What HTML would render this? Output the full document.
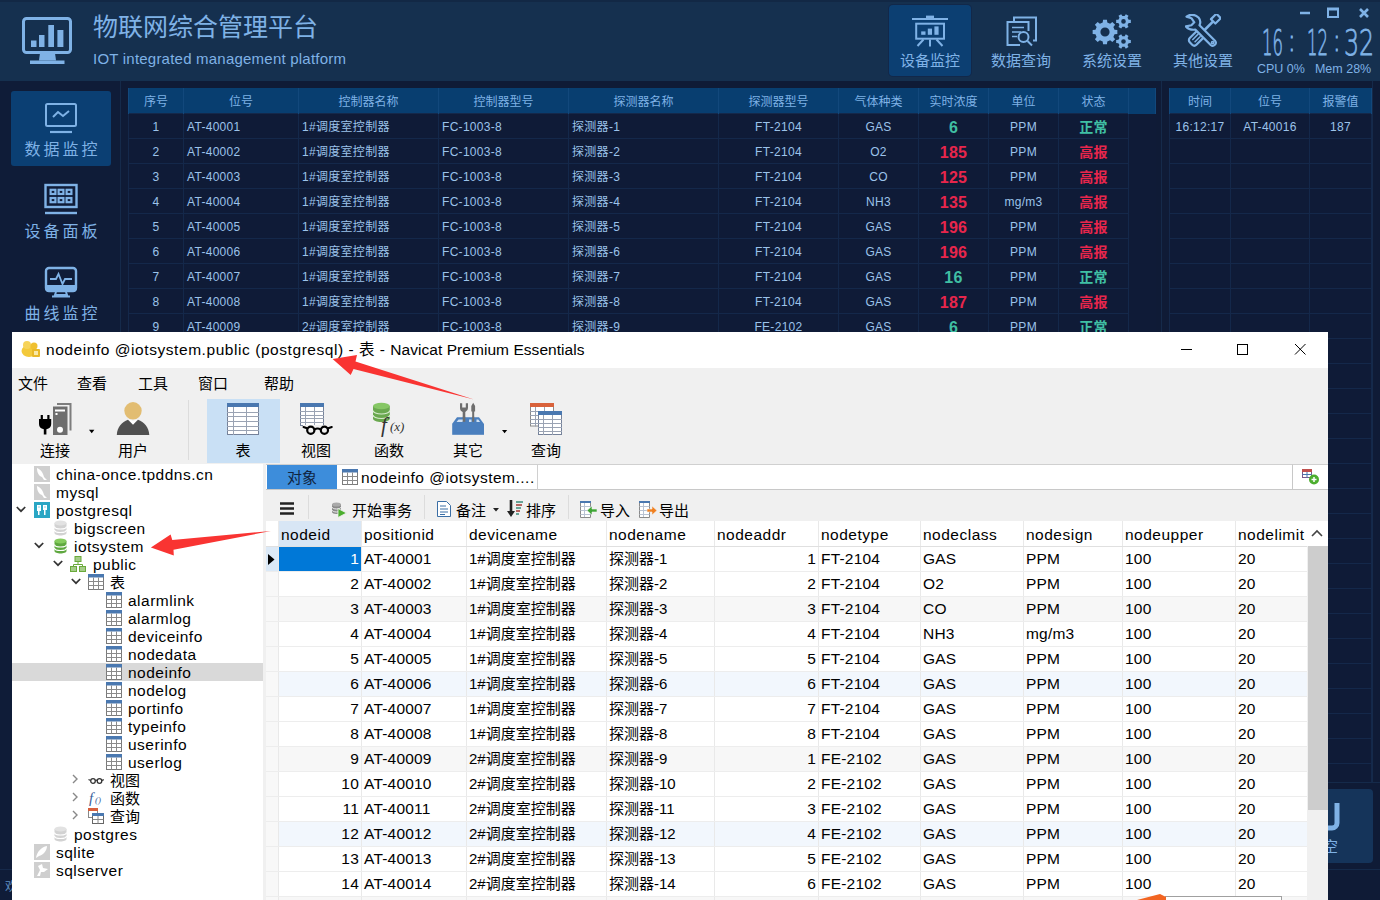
<!DOCTYPE html><html lang="zh"><head><meta charset="utf-8"><title>IOT</title><style>
*{margin:0;padding:0;box-sizing:border-box}
html,body{width:1380px;height:900px;overflow:hidden}
body{position:relative;background:#0f1b36;font-family:"Liberation Sans","Noto Sans CJK SC",sans-serif;font-size:12px;color:#8fb9e6}
.abs{position:absolute}
#hdr{position:absolute;left:0;top:0;width:1380px;height:81px;background:#15304f;box-shadow:inset 0 2px 0 #122845}
#ttl{position:absolute;left:93px;top:9px;font-size:25px;line-height:36px;color:#7fb2e6;white-space:nowrap}
#sub{position:absolute;left:93px;top:49px;font-size:15px;line-height:20px;color:#7fb2e6;white-space:nowrap;letter-spacing:.22px}
.nb{position:absolute;top:5px;width:82px;height:71px;border-radius:4px}
.nb.on{background:#0c3f72;box-shadow:0 0 0 1px #12284a}
.nb span{position:absolute;left:0;width:82px;top:46px;text-align:center;font-size:15px;line-height:20px;color:#7fb2e6;white-space:nowrap}
.nb svg{position:absolute}
#clk span{position:absolute;top:21px;font-family:"DejaVu Sans Light","DejaVu Sans",sans-serif;font-weight:200;font-size:36px;line-height:44px;color:#7fb2e6;-webkit-text-stroke:.8px #7fb2e6;white-space:nowrap;transform-origin:0 0}
#clk span.c{font-size:32px;top:17.5px;-webkit-text-stroke:1.2px #7fb2e6}
#cpu{position:absolute;left:1257px;top:60px;font-size:12.5px;line-height:18px;color:#7fb2e6;white-space:nowrap}#cpu i{font-style:normal;margin-left:10px}
#side{position:absolute;left:0;top:81px;width:121px;height:819px;background:#0f1c38;border-right:1px solid #152a4a}
.sb{position:absolute;left:11px;width:100px;height:75px;border-radius:3px}
.sb.on{background:#0b3f73}
.sb span{position:absolute;left:0;width:100px;top:48px;text-align:center;font-size:16px;line-height:22px;color:#7fb2e6;letter-spacing:3px;text-indent:3px;white-space:nowrap}
.sb svg{position:absolute;left:33px;top:11px}
table{border-collapse:collapse;table-layout:fixed}
.it{position:absolute;font-size:12px;color:#9cc3ea}
.it th{height:25px;line-height:21px;vertical-align:top;background:#083e70;color:#7fb2e6;font-weight:normal;border-left:1px solid #12487c;border-right:1px solid #12487c;padding:4px 0 0;white-space:nowrap;overflow:hidden}
.it td{height:25px;line-height:21px;vertical-align:top;border:1px solid #14284a;padding:3px 3px 0;white-space:nowrap;overflow:hidden;background:#0f1b37}
.it td.c{text-align:center;padding:3px 0 0}
.it td.v{text-align:center;padding:3px 0 0;font-weight:bold;font-size:16px}
.it td.s{text-align:center;padding:3px 0 0;font-weight:bold;font-size:14px}
.l{font-size:15.5px;letter-spacing:.5px}
.u{font-size:15.5px;letter-spacing:.2px}
.it td,.it td.c{letter-spacing:.3px}
.r{color:#e8264c}.g{color:#40bfa3}
/* navicat */
#nv{position:absolute;left:12px;top:332px;width:1316px;height:580px;background:#f0f0f0;color:#000;font-size:15px;overflow:hidden}
#nv .tb{position:absolute;left:0;top:0;width:1316px;height:36px;background:#fff}
#nv .tt{position:absolute;left:34px;top:7px;line-height:22px;white-space:nowrap;color:#000}
.mn{position:absolute;top:41px;font-size:15px;line-height:22px;white-space:nowrap}
.tl{position:absolute;top:108px;width:60px;text-align:center;font-size:15px;line-height:22px;white-space:nowrap}
.ti{position:absolute;top:71px;width:32px;height:32px}
#tree{position:absolute;left:0;top:132px;width:251px;height:448px;background:#fff}
.tr{position:absolute;left:0;width:251px;height:18px;line-height:18px;font-size:15px;white-space:nowrap}
.tr.sel{background:#d9d9d9}
.tr b{position:absolute;font-weight:normal;top:1px}
.tr svg{position:absolute;top:1px}
.gt{position:absolute;font-size:15px;color:#000}
#grid{position:absolute;left:252px;top:189px;width:1043px;height:400px;background:#fff}
.gr{position:absolute;left:0;width:1043px;height:25px;border-bottom:1px solid #ededed;line-height:24px;font-size:15px;white-space:nowrap}
.gr i{position:absolute;top:0;height:24px;font-style:normal;border-left:1px solid #e9e9e9;padding:0 2px;overflow:hidden}
.gr i.n{text-align:right}
</style></head><body>
<div id="hdr">
<svg class="abs" style="left:22px;top:17px" width="51" height="48" viewBox="0 0 51 48"><rect x="1.5" y="1.5" width="47" height="34" rx="3" fill="none" stroke="#7fb2e6" stroke-width="3"/><rect x="9" y="23.5" width="5.5" height="6.5" fill="#7fb2e6"/><rect x="17" y="18" width="5.5" height="12" fill="#7fb2e6"/><rect x="26.3" y="8" width="5.7" height="22" fill="#7fb2e6"/><rect x="35.4" y="13" width="6" height="17" fill="#7fb2e6"/><path d="M18 36h15l1 7.500h-17z" fill="#7fb2e6"/><rect x="8" y="43.500" width="34.500" height="3.500" fill="#7fb2e6"/></svg>
<div id="ttl">物联网综合管理平台</div>
<div id="sub">IOT integrated management platform</div>
<div class="nb on" style="left:889px"><svg style="left:23px;top:10px" width="36" height="32" viewBox="0 0 36 32" fill="none" stroke="#7fb2e6" stroke-width="2"><path d="M0 4h36"/><path d="M14 1.800h8" stroke-width="2.400"/><rect x="4.200" y="8.700" width="27.800" height="15"/><path d="M18 24.500v7M11.500 24.500l-6 6.500M24.500 24.500l6 6.500"/><g fill="#7fb2e6" stroke="none"><rect x="9.200" y="16.400" width="4.300" height="3.400"/><rect x="15.800" y="13.600" width="4.200" height="6.200"/><rect x="22.400" y="11.400" width="4.200" height="8.400"/></g></svg><span>设备监控</span></div>
<div class="nb" style="left:980px"><svg style="left:26px;top:11px" width="32" height="32" viewBox="0 0 32 32" fill="none" stroke="#7fb2e6" stroke-width="2"><path d="M8 5V1.500h22v23h-3"/><path d="M14 29H1.500V6h21v9"/><path d="M6 11.500h12M6 16h9M6 20.500h5" stroke-width="1.600"/><circle cx="17.500" cy="21" r="5"/><path d="M21.500 25l4.500 4.500"/></svg><span>数据查询</span></div>
<div class="nb" style="left:1071px"><svg style="left:21px;top:9px" width="42" height="36" viewBox="0 0 42 36" fill="#7fb2e6" fill-rule="evenodd"><path d="M22.53 15.71 L25.35 16.04 L25.35 19.96 L22.53 20.29 L21.36 23.12 L23.11 25.35 L20.35 28.11 L18.12 26.36 L15.29 27.53 L14.96 30.35 L11.04 30.35 L10.71 27.53 L7.88 26.36 L5.65 28.11 L2.89 25.35 L4.64 23.12 L3.47 20.29 L0.65 19.96 L0.65 16.04 L3.47 15.71 L4.64 12.88 L2.89 10.65 L5.65 7.89 L7.88 9.64 L10.71 8.47 L11.04 5.65 L14.96 5.65 L15.29 8.47 L18.12 9.64 L20.35 7.89 L23.11 10.65 L21.36 12.88Z M8.40 18.00 a4.60 4.60 0 1 0 9.20 0 a4.60 4.60 0 1 0 -9.20 0Z"/><path d="M36.64 5.73 L38.84 5.84 L38.84 8.96 L36.64 9.07 L35.51 11.01 L36.52 12.97 L33.82 14.53 L32.62 12.68 L30.38 12.68 L29.18 14.53 L26.48 12.97 L27.49 11.01 L26.36 9.07 L24.16 8.96 L24.16 5.84 L26.36 5.73 L27.49 3.79 L26.48 1.83 L29.18 0.27 L30.38 2.12 L32.62 2.12 L33.82 0.27 L36.52 1.83 L35.51 3.79Z M29.20 7.40 a2.30 2.30 0 1 0 4.60 0 a2.30 2.30 0 1 0 -4.60 0Z"/><path d="M36.64 25.83 L38.84 25.94 L38.84 29.06 L36.64 29.17 L35.51 31.11 L36.52 33.07 L33.82 34.63 L32.62 32.78 L30.38 32.78 L29.18 34.63 L26.48 33.07 L27.49 31.11 L26.36 29.17 L24.16 29.06 L24.16 25.94 L26.36 25.83 L27.49 23.89 L26.48 21.93 L29.18 20.37 L30.38 22.22 L32.62 22.22 L33.82 20.37 L36.52 21.93 L35.51 23.89Z M29.20 27.50 a2.30 2.30 0 1 0 4.60 0 a2.30 2.30 0 1 0 -4.60 0Z"/></svg><span>系统设置</span></div>
<div class="nb" style="left:1162px"><svg style="left:23px;top:9px" width="36" height="35" viewBox="0 0 36 35" fill="none" stroke="#7fb2e6" stroke-width="2.200" stroke-linejoin="round"><g transform="rotate(-45 18 17.500)"><rect x="1" y="12.800" width="16" height="9.400" rx="3"/><path d="M4.500 15.900h8.500M4.500 19.100h8.500" stroke-width="1.500"/><path d="M17 17.500h15.400" stroke-width="2.600"/><rect x="32.400" y="14.400" width="7.600" height="6.200"/></g><path d="M1.500 2.600Q7.500-1.500 13.500 3.500Q16.500 7 14.500 11.200L30 26.700A3.050 3.050 0 0 1 25.700 31L10.300 15.600Q4.500 16.500 0.900 12.400L6.400 11.200L9.300 8.300L6.400 4.200Z" fill="#15304f"/><circle cx="27.600" cy="28.600" r="1.100" stroke-width="1.600"/></svg><span>其他设置</span></div>
<svg class="abs" style="left:1296px;top:5px" width="80" height="18" viewBox="0 0 80 18" fill="none" stroke="#7fb2e6"><path d="M4 8h10" stroke-width="2.500"/><rect x="32" y="4" width="10" height="8" stroke-width="2"/><path d="M31 4h12" stroke-width="3"/><path d="M64 4l8 8M72 4l-8 8" stroke-width="2.600"/></svg>
<div id="clk"><span style="left:1262px;transform:scaleX(.46)">16</span><span class="c" style="left:1288px;transform:scaleX(.7)">:</span><span style="left:1307px;transform:scaleX(.46)">12</span><span class="c" style="left:1333px;transform:scaleX(.7)">:</span><span style="left:1344px;transform:scaleX(.66)">32</span></div>
<div id="cpu">CPU 0%<i>Mem 28%</i></div>
</div>
<div id="side">
<div class="sb on" style="top:10px"><svg width="34" height="32" viewBox="0 0 34 32" fill="none" stroke="#7fb2e6" stroke-width="2"><rect x="2" y="2" width="30" height="22" rx="1.500"/><path d="M9 15l5-5 5 4 6-5"/><path d="M6 30h22" stroke-width="2.200"/></svg><span>数据监控</span></div>
<div class="sb" style="top:92px"><svg style="top:10px" width="34" height="32" viewBox="0 0 34 32" fill="none" stroke="#7fb2e6" stroke-width="2"><rect x="1.500" y="2" width="31" height="22" stroke-width="2.400"/><path d="M1 30h32" stroke-width="2.400"/><g stroke-width="2.200"><rect x="6.600" y="6.800" width="4.800" height="4.200"/><rect x="14.600" y="6.800" width="4.800" height="4.200"/><rect x="22.600" y="6.800" width="4.800" height="4.200"/><rect x="6.600" y="15" width="4.800" height="4.200"/><rect x="14.600" y="15" width="4.800" height="4.200"/><rect x="22.600" y="15" width="4.800" height="4.200"/></g></svg><span>设备面板</span></div>
<div class="sb" style="top:174px"><svg width="34" height="32" viewBox="0 0 34 32" fill="none" stroke="#7fb2e6" stroke-width="2"><rect x="2" y="2" width="30" height="23" rx="3" stroke-width="2.400"/><path d="M2 20h30v2a3 3 0 0 1-3 3H5a3 3 0 0 1-3-3z" fill="#7fb2e6"/><path d="M6 13h6l2.500-5 4 10 2.500-5h7" stroke-width="1.800"/><path d="M12 26l-1 3h12l-1-3M8 30.500h18" stroke-width="2"/></svg><span>曲线监控</span></div>
<div class="abs" style="left:0;top:788px;width:121px;height:1px;background:#16294a"></div>
<div class="abs" style="left:5px;top:798px;font-size:12px;line-height:16px;color:#5f8fc4;white-space:nowrap">欢迎使用</div>
</div>
<div class="abs" style="left:122px;top:81px;width:1040px;height:260px;border-right:1px solid #152a4a"></div>
<table class="it" style="left:128px;top:88px;width:1027px"><colgroup>
<col style="width:55px">
<col style="width:115px">
<col style="width:140px">
<col style="width:130px">
<col style="width:150px">
<col style="width:120px">
<col style="width:80px">
<col style="width:70px">
<col style="width:70px">
<col style="width:70px">
<col style="width:27px">
</colgroup><tr><th>序号</th><th>位号</th><th>控制器名称</th><th>控制器型号</th><th>探测器名称</th><th>探测器型号</th><th>气体种类</th><th>实时浓度</th><th>单位</th><th>状态</th><th></th></tr>
<tr><td class="c">1</td><td>AT-40001</td><td>1#调度室控制器</td><td>FC-1003-8</td><td>探测器-1</td><td class="c">FT-2104</td><td class="c">GAS</td><td class="v g">6</td><td class="c">PPM</td><td class="s g">正常</td><td style="border-right:0;border-top:0;border-bottom:0"></td></tr>
<tr><td class="c">2</td><td>AT-40002</td><td>1#调度室控制器</td><td>FC-1003-8</td><td>探测器-2</td><td class="c">FT-2104</td><td class="c">O2</td><td class="v r">185</td><td class="c">PPM</td><td class="s r">高报</td><td style="border-right:0;border-top:0;border-bottom:0"></td></tr>
<tr><td class="c">3</td><td>AT-40003</td><td>1#调度室控制器</td><td>FC-1003-8</td><td>探测器-3</td><td class="c">FT-2104</td><td class="c">CO</td><td class="v r">125</td><td class="c">PPM</td><td class="s r">高报</td><td style="border-right:0;border-top:0;border-bottom:0"></td></tr>
<tr><td class="c">4</td><td>AT-40004</td><td>1#调度室控制器</td><td>FC-1003-8</td><td>探测器-4</td><td class="c">FT-2104</td><td class="c">NH3</td><td class="v r">135</td><td class="c">mg/m3</td><td class="s r">高报</td><td style="border-right:0;border-top:0;border-bottom:0"></td></tr>
<tr><td class="c">5</td><td>AT-40005</td><td>1#调度室控制器</td><td>FC-1003-8</td><td>探测器-5</td><td class="c">FT-2104</td><td class="c">GAS</td><td class="v r">196</td><td class="c">PPM</td><td class="s r">高报</td><td style="border-right:0;border-top:0;border-bottom:0"></td></tr>
<tr><td class="c">6</td><td>AT-40006</td><td>1#调度室控制器</td><td>FC-1003-8</td><td>探测器-6</td><td class="c">FT-2104</td><td class="c">GAS</td><td class="v r">196</td><td class="c">PPM</td><td class="s r">高报</td><td style="border-right:0;border-top:0;border-bottom:0"></td></tr>
<tr><td class="c">7</td><td>AT-40007</td><td>1#调度室控制器</td><td>FC-1003-8</td><td>探测器-7</td><td class="c">FT-2104</td><td class="c">GAS</td><td class="v g">16</td><td class="c">PPM</td><td class="s g">正常</td><td style="border-right:0;border-top:0;border-bottom:0"></td></tr>
<tr><td class="c">8</td><td>AT-40008</td><td>1#调度室控制器</td><td>FC-1003-8</td><td>探测器-8</td><td class="c">FT-2104</td><td class="c">GAS</td><td class="v r">187</td><td class="c">PPM</td><td class="s r">高报</td><td style="border-right:0;border-top:0;border-bottom:0"></td></tr>
<tr><td class="c">9</td><td>AT-40009</td><td>2#调度室控制器</td><td>FC-1003-8</td><td>探测器-9</td><td class="c">FE-2102</td><td class="c">GAS</td><td class="v g">6</td><td class="c">PPM</td><td class="s g">正常</td><td style="border-right:0;border-top:0;border-bottom:0"></td></tr>
<tr><td class="c">10</td><td>AT-40010</td><td>2#调度室控制器</td><td>FC-1003-8</td><td>探测器-10</td><td class="c">FE-2102</td><td class="c">GAS</td><td class="v g">8</td><td class="c">PPM</td><td class="s g">正常</td><td style="border-right:0;border-top:0;border-bottom:0"></td></tr>
</table>
<table class="it" style="left:1169px;top:88px;width:202px"><colgroup><col style="width:61px"><col style="width:79px"><col style="width:62px"></colgroup>
<tr><th>时间</th><th>位号</th><th>报警值</th></tr>
<tr><td class="c">16:12:17</td><td class="c">AT-40016</td><td class="c">187</td></tr>
<tr><td></td><td></td><td></td></tr>
<tr><td></td><td></td><td></td></tr>
<tr><td></td><td></td><td></td></tr>
<tr><td></td><td></td><td></td></tr>
<tr><td></td><td></td><td></td></tr>
<tr><td></td><td></td><td></td></tr>
<tr><td></td><td></td><td></td></tr>
<tr><td></td><td></td><td></td></tr>
<tr><td></td><td></td><td></td></tr>
<tr><td></td><td></td><td></td></tr>
<tr><td></td><td></td><td></td></tr>
<tr><td></td><td></td><td></td></tr>
<tr><td></td><td></td><td></td></tr>
<tr><td></td><td></td><td></td></tr>
<tr><td></td><td></td><td></td></tr>
<tr><td></td><td></td><td></td></tr>
<tr><td></td><td></td><td></td></tr>
<tr><td></td><td></td><td></td></tr>
<tr><td></td><td></td><td></td></tr>
<tr><td></td><td></td><td></td></tr>
<tr><td></td><td></td><td></td></tr>
<tr><td></td><td></td><td></td></tr>
<tr><td></td><td></td><td></td></tr>
<tr><td></td><td></td><td></td></tr>
<tr><td></td><td></td><td></td></tr>
<tr><td></td><td></td><td></td></tr>
</table>
<div class="abs" style="left:1163px;top:782px;width:217px;height:118px;background:#0f1b36;border-top:1px solid #152a4a"></div>
<div class="abs" style="left:1372px;top:81px;width:1px;height:701px;background:#152a4a"></div>
<div class="abs" style="left:1163px;top:869px;width:217px;height:1px;background:#152a4a"></div>
<div class="abs" style="left:1300px;top:789px;width:73px;height:74px;background:#15345a;border-radius:4px;overflow:hidden"><svg class="abs" style="left:20px;top:14px" width="34" height="28" viewBox="0 0 34 28" fill="none" stroke="#7fb2e6" stroke-width="5"><path d="M3 0v20a5 5 0 0 0 5 5h4a5 5 0 0 0 5-5V0"/></svg><span class="abs" style="left:8px;top:49px;font-size:15px;line-height:18px;color:#7fb2e6;white-space:nowrap">清空</span></div>
<div id="nv">
<div class="tb"></div>
<svg class="abs" style="left:9px;top:8px" width="20" height="18" viewBox="0 0 20 18"><ellipse cx="8" cy="11" rx="7.500" ry="6" fill="#f3c93b"/><circle cx="6" cy="5" r="4" fill="#f6d35a"/><circle cx="13" cy="6" r="3.500" fill="#f0c030"/><rect x="11" y="9" width="8" height="8" rx="1" fill="#e9b92a"/><rect x="13" y="11" width="4" height="4" fill="#f9e9a8"/></svg>
<div class="tt l"><span style="letter-spacing:.56px">nodeinfo @iotsystem.public (postgresql)</span> - 表 - <span style="letter-spacing:.05px">Navicat Premium Essentials</span></div>
<svg class="abs" style="left:1160px;top:8px" width="150" height="20" viewBox="0 0 150 20" fill="none" stroke="#000" stroke-width="1"><path d="M9 9.500h11"/><rect x="65.500" y="4.500" width="10" height="10"/><path d="M123 4l10.500 10.500M133.500 4l-10.500 10.500"/></svg>
<div class="mn" style="left:6px">文件</div>
<div class="mn" style="left:65px">查看</div>
<div class="mn" style="left:126px">工具</div>
<div class="mn" style="left:186px">窗口</div>
<div class="mn" style="left:252px">帮助</div>
<div class="abs" style="left:195px;top:67px;width:73px;height:64px;background:#c9e0f5"></div>
<div class="abs" style="left:176px;top:68px;width:1px;height:60px;background:#dcdcdc"></div>
<svg class="abs" style="left:26px;top:70px" width="36" height="34" viewBox="38 402 36 34"><path d="M57 404h13.500v26.500" fill="none" stroke="#7d7d7d" stroke-width="2"/><rect x="53" y="406.500" width="14.500" height="28.500" fill="#6e6e6e"/><rect x="55" y="409.500" width="10" height="2" fill="#fff"/><rect x="55.500" y="413" width="2" height="2" fill="#fff"/><circle cx="60" cy="429.800" r="3" fill="#fff"/><path d="M41.800 415v5M48.400 415v5" stroke="#000" stroke-width="2.200"/><path d="M39 419h12.200v5a6.100 5.500 0 0 1-4.800 5.300V434.500h-2.600V429.300A6.100 5.500 0 0 1 39 424z" fill="#000"/></svg>
<svg class="abs" style="left:76px;top:97px" width="8" height="6" viewBox="88 429 8 6"><path d="M89 429.800h5.400l-2.700 3.500z" fill="#000"/></svg>
<svg class="abs" style="left:104px;top:69px" width="34" height="35" viewBox="116 401 34 35"><circle cx="133" cy="410.800" r="8.700" fill="#e2bd72"/><path d="M116.800 435c0.500-8 5-13 11.200-15.200l5 5 5-5c6.200 2.200 10.800 7.200 11.300 15.200z" fill="#505050"/><path d="M128.500 419.300l4.500 5 4.500-5-4.500 1.600z" fill="#fff"/></svg>
<svg class="abs" style="left:215px;top:71px" width="32" height="32" viewBox="227 403 32 32"><rect x="227.5" y="403.5" width="31" height="31" fill="#fff" stroke="#75829a"/><rect x="227" y="403" width="32" height="4" fill="#4a78b0"/><path d="M233.5 407V435M246.5 407V435M227 412.5H259M227 416.5H259M227 421.5H259M227 426.5H259M227 430.5H259" stroke="#9aa3b3" fill="none"/></svg>
<svg class="abs" style="left:288px;top:71px" width="33" height="33" viewBox="300 403 33 33"><rect x="300.5" y="403.5" width="23" height="22" fill="#fff" stroke="#75829a"/><rect x="300" y="403" width="24" height="4" fill="#4a78b0"/><path d="M305.5 407V426M314.5 407V426M300 411.5H324M300 415.5H324M300 418.5H324M300 422.5H324" stroke="#9aa3b3" fill="none"/><rect x="303" y="425" width="22" height="2" fill="#f0f0f0"/><circle cx="310.800" cy="430.200" r="3.600" fill="#f0f0f0" stroke="#000" stroke-width="2.200"/><circle cx="324.400" cy="430.200" r="3.600" fill="#f0f0f0" stroke="#000" stroke-width="2.200"/><path d="M314.500 429.500q3-2 6.200 0M307 428.200l-3.500-1.200M328.200 428.200l3.600-1.200" stroke="#000" stroke-width="2" fill="none" stroke-linecap="round"/></svg>
<svg class="abs" style="left:360px;top:70px" width="34" height="35" viewBox="372 402 34 35"><path d="M373 406v12.500c0 2 3.800 3.500 8.400 3.500s8.400-1.500 8.400-3.500V406z" fill="#6aa84f"/><ellipse cx="381.400" cy="406" rx="8.400" ry="3.200" fill="#86c765"/><path d="M373 410.500c0 2 3.800 3.500 8.400 3.500s8.400-1.500 8.400-3.500M373 415c0 2 3.800 3.500 8.400 3.500s8.400-1.500 8.400-3.500" stroke="#d8ecd0" stroke-width="1.200" fill="none"/><text x="381" y="431.500" font-family="Liberation Serif,serif" font-style="italic" font-size="21" fill="#333" stroke="#f0f0f0" stroke-width="0">f</text><text x="390" y="431" font-family="Liberation Serif,serif" font-style="italic" font-size="13" fill="#333">(x)</text></svg>
<svg class="abs" style="left:439px;top:70px" width="34" height="34" viewBox="451 402 34 34"><path transform="translate(-2 0)" d="M464.700 421.500V412a4.200 4.200 0 0 1-2.700-4V403.300h2.200v4.200h3.600v-4.200h2.200V408a4.200 4.200 0 0 1-2.700 4V421.500z" fill="#6e6e6e"/><path d="M473.200 402.800l1.900 3.200v5.500h-0.900V421.500h-2V411.500h-0.900V406z" fill="#6e6e6e"/><path d="M457 417.200h22l5 6.800h-32z" fill="#4a7fbe"/><path d="M458.500 419.500h5l-1 2.500h-6zM469 419.500h2.500v2.500H469zM476.500 419.500h1.800l1.800 2.500h-3.600z" fill="#cfe0f2"/><rect x="452.200" y="424" width="31.800" height="10.800" fill="#4a7fbe"/><path d="M464 421.800v-5" stroke="#6e6e6e" stroke-width="2.600"/><path d="M473.200 421.800v-5" stroke="#6e6e6e" stroke-width="2"/></svg>
<svg class="abs" style="left:489px;top:97px" width="8" height="6" viewBox="501 429 8 6"><path d="M502 430h5.200l-2.600 3.300z" fill="#000"/></svg>
<svg class="abs" style="left:518px;top:71px" width="33" height="33" viewBox="530 403 33 33"><rect x="530.5" y="403.5" width="23" height="22.5" fill="#fff" stroke="#8a8a8a"/><rect x="530" y="403" width="24" height="4" fill="#d9623b"/><path d="M535.5 407V426.5M544.5 407V426.5M530 411.5H554M530 415.5H554M530 419.5H554M530 423.5H554" stroke="#9aa3b3" fill="none"/><rect x="538.5" y="411.5" width="23" height="23" fill="#fff" stroke="#75829a"/><rect x="538" y="411" width="24" height="4" fill="#4a78b0"/><path d="M543.5 415V435M552.5 415V435M538 419.5H562M538 423.5H562M538 427.5H562M538 431.5H562" stroke="#9aa3b3" fill="none"/></svg>
<div class="tl" style="left:13px">连接</div>
<div class="tl" style="left:91px">用户</div>
<div class="tl" style="left:201px">表</div>
<div class="tl" style="left:274px">视图</div>
<div class="tl" style="left:347px">函数</div>
<div class="tl" style="left:426px">其它</div>
<div class="tl" style="left:504px">查询</div>
<div id="tree">
<div class="tr" style="top:1px"><svg style="left:22px" width="16" height="16" viewBox="0 0 16 16"><rect width="16" height="16" fill="#cfcfcf"/><path d="M3 2c3 1 6 4 7 9l3 3h-3l-2-3c-3-1-5-4-5-9z" fill="#fff"/></svg><b class="l" style="left:44px">china-once.tpddns.cn</b></div>
<div class="tr" style="top:19px"><svg style="left:22px" width="16" height="16" viewBox="0 0 16 16"><rect width="16" height="16" fill="#cfcfcf"/><path d="M3 2c3 1 6 4 7 9l3 3h-3l-2-3c-3-1-5-4-5-9z" fill="#fff"/></svg><b class="l" style="left:44px">mysql</b></div>
<div class="tr" style="top:37px"><svg style="left:4px;top:5px" width="10" height="7" viewBox="0 0 10 7"><path d="M0.800 1l4.200 4.200 4.200-4.200" fill="none" stroke="#333" stroke-width="1.700"/></svg><svg style="left:22px" width="16" height="16" viewBox="0 0 16 16"><rect width="16" height="16" fill="#2aa6c4"/><path d="M3 3h4v6H5.500v4H4V9H3zM9 3h4v5h-1.500v5H10V8H9z" fill="#fff"/><path d="M4.500 5h1M10.500 5h1" stroke="#2aa6c4"/></svg><b class="l" style="left:44px">postgresql</b></div>
<div class="tr" style="top:55px"><svg style="left:42px" width="16" height="16" viewBox="1.500 0 16 16"><path d="M2 3v10c0 1.500 3 2.500 6 2.500s6-1 6-2.500V3z" fill="#d2d2d2"/><ellipse cx="8" cy="3" rx="6" ry="2.500" fill="#e2e2e2"/><path d="M2 6.500c0 1.500 3 2.500 6 2.500s6-1 6-2.500M2 10c0 1.500 3 2.500 6 2.500s6-1 6-2.500" stroke="#fff" stroke-width="1.200" fill="none"/></svg><b class="l" style="left:62px">bigscreen</b></div>
<div class="tr" style="top:73px"><svg style="left:22px;top:5px" width="10" height="7" viewBox="0 0 10 7"><path d="M0.800 1l4.200 4.200 4.200-4.200" fill="none" stroke="#333" stroke-width="1.700"/></svg><svg style="left:42px" width="16" height="16" viewBox="1.500 0 16 16"><path d="M2 3v10c0 1.500 3 2.500 6 2.500s6-1 6-2.500V3z" fill="#5fa83f"/><ellipse cx="8" cy="3" rx="6" ry="2.500" fill="#86cc5e"/><path d="M2 6.500c0 1.500 3 2.500 6 2.500s6-1 6-2.500M2 10c0 1.500 3 2.500 6 2.500s6-1 6-2.500" stroke="#fff" stroke-width="1.200" fill="none"/></svg><b class="l" style="left:62px">iotsystem</b></div>
<div class="tr" style="top:91px"><svg style="left:41px;top:5px" width="10" height="7" viewBox="0 0 10 7"><path d="M0.800 1l4.200 4.200 4.200-4.200" fill="none" stroke="#333" stroke-width="1.700"/></svg><svg style="left:58px" width="16" height="16" viewBox="0 0 16 16" fill="#6aaa3a"><rect x="4.500" y="0" width="7" height="6"/><rect x="0" y="10" width="7" height="6"/><rect x="9" y="10" width="7" height="6"/><path d="M8 6v2.500M3.500 10V8.500h9V10" stroke="#6aaa3a" fill="none"/><path d="M5.500 2h5M5.500 4h5M1 12h5M1 14h5M10 12h5M10 14h5" stroke="#fff" stroke-width="0.800"/></svg><b class="l" style="left:81px">public</b></div>
<div class="tr" style="top:109px"><svg style="left:59px;top:5px" width="10" height="7" viewBox="0 0 10 7"><path d="M0.800 1l4.200 4.200 4.200-4.200" fill="none" stroke="#333" stroke-width="1.700"/></svg><svg style="left:76px" width="16" height="16" viewBox="0 0 16 16"><rect x="0.500" y="0.500" width="15" height="15" fill="#fff" stroke="#7a7a7a"/><rect x="0" y="0" width="16" height="3.500" fill="#4a78b0"/><path d="M0.500 7.500h15M0.500 11.500h15M5.500 3.500v12M10.500 3.500v12" stroke="#8a8a8a" fill="none"/></svg><b style="left:98px">表</b></div>
<div class="tr" style="top:127px"><svg style="left:94px" width="16" height="16" viewBox="0 0 16 16"><rect x="0.500" y="0.500" width="15" height="15" fill="#fff" stroke="#7a7a7a"/><rect x="0" y="0" width="16" height="3.500" fill="#4a78b0"/><path d="M0.500 7.500h15M0.500 11.500h15M5.500 3.500v12M10.500 3.500v12" stroke="#8a8a8a" fill="none"/></svg><b class="l" style="left:116px">alarmlink</b></div>
<div class="tr" style="top:145px"><svg style="left:94px" width="16" height="16" viewBox="0 0 16 16"><rect x="0.500" y="0.500" width="15" height="15" fill="#fff" stroke="#7a7a7a"/><rect x="0" y="0" width="16" height="3.500" fill="#4a78b0"/><path d="M0.500 7.500h15M0.500 11.500h15M5.500 3.500v12M10.500 3.500v12" stroke="#8a8a8a" fill="none"/></svg><b class="l" style="left:116px">alarmlog</b></div>
<div class="tr" style="top:163px"><svg style="left:94px" width="16" height="16" viewBox="0 0 16 16"><rect x="0.500" y="0.500" width="15" height="15" fill="#fff" stroke="#7a7a7a"/><rect x="0" y="0" width="16" height="3.500" fill="#4a78b0"/><path d="M0.500 7.500h15M0.500 11.500h15M5.500 3.500v12M10.500 3.500v12" stroke="#8a8a8a" fill="none"/></svg><b class="l" style="left:116px">deviceinfo</b></div>
<div class="tr" style="top:181px"><svg style="left:94px" width="16" height="16" viewBox="0 0 16 16"><rect x="0.500" y="0.500" width="15" height="15" fill="#fff" stroke="#7a7a7a"/><rect x="0" y="0" width="16" height="3.500" fill="#4a78b0"/><path d="M0.500 7.500h15M0.500 11.500h15M5.500 3.500v12M10.500 3.500v12" stroke="#8a8a8a" fill="none"/></svg><b class="l" style="left:116px">nodedata</b></div>
<div class="tr sel" style="top:199px"><svg style="left:94px" width="16" height="16" viewBox="0 0 16 16"><rect x="0.500" y="0.500" width="15" height="15" fill="#fff" stroke="#7a7a7a"/><rect x="0" y="0" width="16" height="3.500" fill="#4a78b0"/><path d="M0.500 7.500h15M0.500 11.500h15M5.500 3.500v12M10.500 3.500v12" stroke="#8a8a8a" fill="none"/></svg><b class="l" style="left:116px">nodeinfo</b></div>
<div class="tr" style="top:217px"><svg style="left:94px" width="16" height="16" viewBox="0 0 16 16"><rect x="0.500" y="0.500" width="15" height="15" fill="#fff" stroke="#7a7a7a"/><rect x="0" y="0" width="16" height="3.500" fill="#4a78b0"/><path d="M0.500 7.500h15M0.500 11.500h15M5.500 3.500v12M10.500 3.500v12" stroke="#8a8a8a" fill="none"/></svg><b class="l" style="left:116px">nodelog</b></div>
<div class="tr" style="top:235px"><svg style="left:94px" width="16" height="16" viewBox="0 0 16 16"><rect x="0.500" y="0.500" width="15" height="15" fill="#fff" stroke="#7a7a7a"/><rect x="0" y="0" width="16" height="3.500" fill="#4a78b0"/><path d="M0.500 7.500h15M0.500 11.500h15M5.500 3.500v12M10.500 3.500v12" stroke="#8a8a8a" fill="none"/></svg><b class="l" style="left:116px">portinfo</b></div>
<div class="tr" style="top:253px"><svg style="left:94px" width="16" height="16" viewBox="0 0 16 16"><rect x="0.500" y="0.500" width="15" height="15" fill="#fff" stroke="#7a7a7a"/><rect x="0" y="0" width="16" height="3.500" fill="#4a78b0"/><path d="M0.500 7.500h15M0.500 11.500h15M5.500 3.500v12M10.500 3.500v12" stroke="#8a8a8a" fill="none"/></svg><b class="l" style="left:116px">typeinfo</b></div>
<div class="tr" style="top:271px"><svg style="left:94px" width="16" height="16" viewBox="0 0 16 16"><rect x="0.500" y="0.500" width="15" height="15" fill="#fff" stroke="#7a7a7a"/><rect x="0" y="0" width="16" height="3.500" fill="#4a78b0"/><path d="M0.500 7.500h15M0.500 11.500h15M5.500 3.500v12M10.500 3.500v12" stroke="#8a8a8a" fill="none"/></svg><b class="l" style="left:116px">userinfo</b></div>
<div class="tr" style="top:289px"><svg style="left:94px" width="16" height="16" viewBox="0 0 16 16"><rect x="0.500" y="0.500" width="15" height="15" fill="#fff" stroke="#7a7a7a"/><rect x="0" y="0" width="16" height="3.500" fill="#4a78b0"/><path d="M0.500 7.500h15M0.500 11.500h15M5.500 3.500v12M10.500 3.500v12" stroke="#8a8a8a" fill="none"/></svg><b class="l" style="left:116px">userlog</b></div>
<div class="tr" style="top:307px"><svg style="left:60px;top:3px" width="7" height="10" viewBox="0 0 7 10"><path d="M1 1l4 4-4 4" fill="none" stroke="#888" stroke-width="1.400"/></svg><svg style="left:76px" width="16" height="16" viewBox="0 0 16 16" fill="none" stroke="#333" stroke-width="1.300"><circle cx="5" cy="9" r="2.300"/><circle cx="11.500" cy="9" r="2.300"/><path d="M7.300 8.500q1-.8 2 0M2.700 8.500L0.500 7.500M13.800 8.500l2-1"/></svg><b style="left:98px">视图</b></div>
<div class="tr" style="top:325px"><svg style="left:60px;top:3px" width="7" height="10" viewBox="0 0 7 10"><path d="M1 1l4 4-4 4" fill="none" stroke="#888" stroke-width="1.400"/></svg><svg style="left:76px" width="16" height="16" viewBox="0 0 16 16"><text x="1" y="13" font-family="Liberation Serif,serif" font-style="italic" font-size="15" fill="#3a5f9a">f</text><text x="7" y="13" font-family="Liberation Serif,serif" font-style="italic" font-size="9" fill="#3a5f9a">()</text></svg><b style="left:98px">函数</b></div>
<div class="tr" style="top:343px"><svg style="left:60px;top:3px" width="7" height="10" viewBox="0 0 7 10"><path d="M1 1l4 4-4 4" fill="none" stroke="#888" stroke-width="1.400"/></svg><svg style="left:76px" width="16" height="16" viewBox="0 0 16 16"><rect x="0.500" y="0.500" width="9" height="9" fill="#fff" stroke="#888"/><rect x="0" y="0" width="10" height="3" fill="#d9603b"/><rect x="4.500" y="5.500" width="11" height="10" fill="#fff" stroke="#666"/><rect x="4" y="5" width="12" height="3" fill="#4a78b0"/><path d="M4.500 11.500h11M10 8v7.500" stroke="#888"/></svg><b style="left:98px">查询</b></div>
<div class="tr" style="top:361px"><svg style="left:42px" width="16" height="16" viewBox="1.500 0 16 16"><path d="M2 3v10c0 1.500 3 2.500 6 2.500s6-1 6-2.500V3z" fill="#d2d2d2"/><ellipse cx="8" cy="3" rx="6" ry="2.500" fill="#e2e2e2"/><path d="M2 6.500c0 1.500 3 2.500 6 2.500s6-1 6-2.500M2 10c0 1.500 3 2.500 6 2.500s6-1 6-2.500" stroke="#fff" stroke-width="1.200" fill="none"/></svg><b class="l" style="left:62px">postgres</b></div>
<div class="tr" style="top:379px"><svg style="left:22px" width="16" height="16" viewBox="0 0 16 16"><rect width="16" height="16" fill="#cfcfcf"/><path d="M2 14c1-6 5-11 11-12c0 5-4 9-8 10z" fill="#fff"/></svg><b class="l" style="left:44px">sqlite</b></div>
<div class="tr" style="top:397px"><svg style="left:22px" width="16" height="16" viewBox="0 0 16 16"><rect width="16" height="16" fill="#cfcfcf"/><path d="M3 14l3-6-2-4 4-2 1 4 5 1-4 3-3 0-1 4z" fill="#fff"/></svg><b class="l" style="left:44px">sqlserver</b></div>
</div>
<div class="abs" style="left:253px;top:132px;width:1028px;height:26px;background:#fff;border-top:1px solid #d0d0d0;border-bottom:1px solid #c8c8c8;border-right:1px solid #c8c8c8"></div>
<div class="abs" style="left:1281px;top:132px;width:35px;height:26px;background:#fff;border-top:1px solid #d0d0d0;border-bottom:1px solid #c8c8c8"></div>
<svg class="abs" style="left:1290px;top:137px" width="18" height="16" viewBox="0 0 18 16"><rect x="0.500" y="0.500" width="9" height="8" fill="#fff" stroke="#7a5a8a"/><rect x="0" y="0" width="10" height="3" fill="#c0504d"/><path d="M0.500 5.500h9M5 3v6" stroke="#4a78b0"/><circle cx="12" cy="10.500" r="5" fill="#4cae2e"/><path d="M9.500 10.500h5M12 8v5" stroke="#fff" stroke-width="1.500"/></svg>
<div class="abs" style="left:255px;top:133px;width:70px;height:24px;background:#3d8ddb;text-align:center;line-height:26px;font-size:15px;color:#10243f">对象</div>
<svg class="abs" style="top:137px;left:330px" width="16" height="16" viewBox="0 0 16 16"><rect x="0.500" y="0.500" width="15" height="15" fill="#fff" stroke="#7a7a7a"/><rect x="0" y="0" width="16" height="3.500" fill="#4a78b0"/><path d="M0.500 7.500h15M0.500 11.500h15M5.500 3.500v12M10.500 3.500v12" stroke="#8a8a8a" fill="none"/></svg>
<div class="abs l" style="left:349px;top:134px;line-height:24px;white-space:nowrap">nodeinfo @iotsystem....</div>
<div class="abs" style="left:525px;top:133px;width:1px;height:25px;background:#d0d0d0"></div>
<svg class="abs" style="left:268px;top:170px" width="14" height="13" viewBox="0 0 14 13"><path d="M0 1.500h14M0 6.500h14M0 11.500h14" stroke="#222" stroke-width="2.400"/></svg>
<div class="abs" style="left:296px;top:163px;width:1px;height:24px;background:#dcdcdc"></div>
<div class="abs" style="left:412px;top:163px;width:1px;height:24px;background:#dcdcdc"></div>
<div class="abs" style="left:556px;top:163px;width:1px;height:24px;background:#dcdcdc"></div>
<svg class="abs" style="left:319px;top:170px" width="16" height="16" viewBox="0 0 16 16"><path d="M1 2v8c0 1 2 2 4.500 2S10 11 10 10V2z" fill="#8a8a8a"/><ellipse cx="5.500" cy="2.500" rx="4.500" ry="2" fill="#aaa"/><path d="M1 5c0 1 2 2 4.500 2S10 6 10 5M1 8c0 1 2 2 4.500 2S10 9 10 8" stroke="#eee" fill="none"/><path d="M7 6.500l8.500 4.500L7 15.500z" fill="#4cae2e" stroke="#f0f0f0" stroke-width="0.800"/></svg>
<div class="abs" style="left:340px;top:168px;line-height:22px">开始事务</div>
<svg class="abs" style="left:425px;top:169px" width="14" height="16" viewBox="0 0 14 16"><path d="M0.500 0.500h9l4 4v11h-13z" fill="#fff" stroke="#3a6ea5"/><path d="M3 5h6M3 8h8M3 11h8M3 13.500h5" stroke="#3a6ea5"/></svg>
<div class="abs" style="left:444px;top:168px;line-height:22px">备注</div>
<svg class="abs" style="left:481px;top:176px" width="7" height="4" viewBox="0 0 7 4"><path d="M0 0h6l-3 3.500z" fill="#222"/></svg>
<svg class="abs" style="left:495px;top:168px" width="16" height="18" viewBox="0 0 16 18"><path d="M4 0v14" stroke="#222" stroke-width="2.600"/><path d="M0 11l4 6 4-6z" fill="#222"/><path d="M9 2h7M9 5h6M9 8h5M9 11h4M9 14h3" stroke="#3a8a7a" stroke-width="1.400"/><path d="M9 5h6M9 11h4" stroke="#d05050" stroke-width="1.400"/></svg>
<div class="abs" style="left:514px;top:168px;line-height:22px">排序</div>
<svg class="abs" style="left:568px;top:169px" width="18" height="17" viewBox="0 0 18 17"><path d="M0.500 0.500h10v16h-10z" fill="#fff" stroke="#8a8a8a"/><path d="M0 1h11" stroke="#4a78b0" stroke-width="2"/><path d="M0.500 5.500h10M0.500 9.500h10M0.500 13.500h10M4.500 2v14" stroke="#b9c3d3"/><path d="M17 8h-5V5l-5 4.500 5 4.500v-3h5z" fill="#3fa535" stroke="#f0f0f0" stroke-width=".6"/></svg>
<div class="abs" style="left:588px;top:168px;line-height:22px">导入</div>
<svg class="abs" style="left:627px;top:169px" width="18" height="17" viewBox="0 0 18 17"><path d="M0.500 0.500h10v16h-10z" fill="#fff" stroke="#8a8a8a"/><path d="M0 1h11" stroke="#4a78b0" stroke-width="2"/><path d="M0.500 5.500h10M0.500 9.500h10M0.500 13.500h10M4.500 2v14" stroke="#b9c3d3"/><path d="M8 8h5V5l5 4.500-5 4.500v-3H8z" fill="#f08020" stroke="#f0f0f0" stroke-width=".6"/></svg>
<div class="abs" style="left:647px;top:168px;line-height:22px">导出</div>
<div id="grid">
<div class="gr" style="top:0;height:26px;line-height:27px;border-bottom:1px solid #e0e0e0"><i style="left:0;width:14px;border-left:0;background:#fff"></i><i class="l" style="height:25px;left:14px;width:83px;background:#d8e6f5">nodeid</i><i class="l" style="height:25px;left:97px;width:105px">positionid</i><i class="l" style="height:25px;left:202px;width:140px">devicename</i><i class="l" style="height:25px;left:342px;width:109px">nodename</i><i class="l" style="height:25px;left:450px;width:104px">nodeaddr</i><i class="l" style="height:25px;left:554px;width:102px">nodetype</i><i class="l" style="height:25px;left:656px;width:103px">nodeclass</i><i class="l" style="height:25px;left:759px;width:99px">nodesign</i><i class="l" style="height:25px;left:858px;width:113px">nodeupper</i><i class="l" style="height:25px;left:971px;width:72px">nodelimit</i></div>
<div class="gr" style="top:26px"><i style="left:0;width:14px;border-left:0;background:#dbe9f7"><svg style="position:absolute;left:4px;top:7px" width="7" height="11" viewBox="0 0 7 11"><path d="M0 0l6.500 5.500L0 11z" fill="#000"/></svg></i><i class="n u" style="left:14px;width:83px;background:#0078d7;color:#fff">1</i><i class="u" style="left:97px;width:105px">AT-40001</i><i style="left:202px;width:140px">1#调度室控制器</i><i style="left:342px;width:109px">探测器-1</i><i class="n u" style="left:450px;width:104px">1</i><i class="u" style="left:554px;width:102px">FT-2104</i><i class="u" style="left:656px;width:103px">GAS</i><i class="u" style="left:759px;width:99px">PPM</i><i class="u" style="left:858px;width:113px">100</i><i class="u" style="left:971px;width:72px">20</i></div>
<div class="gr" style="top:51px"><i style="left:0;width:14px;border-left:0;background:#f8f8f8"></i><i class="n u" style="left:14px;width:83px">2</i><i class="u" style="left:97px;width:105px">AT-40002</i><i style="left:202px;width:140px">1#调度室控制器</i><i style="left:342px;width:109px">探测器-2</i><i class="n u" style="left:450px;width:104px">2</i><i class="u" style="left:554px;width:102px">FT-2104</i><i class="u" style="left:656px;width:103px">O2</i><i class="u" style="left:759px;width:99px">PPM</i><i class="u" style="left:858px;width:113px">100</i><i class="u" style="left:971px;width:72px">20</i></div>
<div class="gr" style="top:76px;background:#f7f7f7"><i style="left:0;width:14px;border-left:0;background:#f8f8f8"></i><i class="n u" style="left:14px;width:83px">3</i><i class="u" style="left:97px;width:105px">AT-40003</i><i style="left:202px;width:140px">1#调度室控制器</i><i style="left:342px;width:109px">探测器-3</i><i class="n u" style="left:450px;width:104px">3</i><i class="u" style="left:554px;width:102px">FT-2104</i><i class="u" style="left:656px;width:103px">CO</i><i class="u" style="left:759px;width:99px">PPM</i><i class="u" style="left:858px;width:113px">100</i><i class="u" style="left:971px;width:72px">20</i></div>
<div class="gr" style="top:101px"><i style="left:0;width:14px;border-left:0;background:#f8f8f8"></i><i class="n u" style="left:14px;width:83px">4</i><i class="u" style="left:97px;width:105px">AT-40004</i><i style="left:202px;width:140px">1#调度室控制器</i><i style="left:342px;width:109px">探测器-4</i><i class="n u" style="left:450px;width:104px">4</i><i class="u" style="left:554px;width:102px">FT-2104</i><i class="u" style="left:656px;width:103px">NH3</i><i class="u" style="left:759px;width:99px">mg/m3</i><i class="u" style="left:858px;width:113px">100</i><i class="u" style="left:971px;width:72px">20</i></div>
<div class="gr" style="top:126px"><i style="left:0;width:14px;border-left:0;background:#f8f8f8"></i><i class="n u" style="left:14px;width:83px">5</i><i class="u" style="left:97px;width:105px">AT-40005</i><i style="left:202px;width:140px">1#调度室控制器</i><i style="left:342px;width:109px">探测器-5</i><i class="n u" style="left:450px;width:104px">5</i><i class="u" style="left:554px;width:102px">FT-2104</i><i class="u" style="left:656px;width:103px">GAS</i><i class="u" style="left:759px;width:99px">PPM</i><i class="u" style="left:858px;width:113px">100</i><i class="u" style="left:971px;width:72px">20</i></div>
<div class="gr" style="top:151px;background:#f2f7fd"><i style="left:0;width:14px;border-left:0;background:#f8f8f8"></i><i class="n u" style="left:14px;width:83px">6</i><i class="u" style="left:97px;width:105px">AT-40006</i><i style="left:202px;width:140px">1#调度室控制器</i><i style="left:342px;width:109px">探测器-6</i><i class="n u" style="left:450px;width:104px">6</i><i class="u" style="left:554px;width:102px">FT-2104</i><i class="u" style="left:656px;width:103px">GAS</i><i class="u" style="left:759px;width:99px">PPM</i><i class="u" style="left:858px;width:113px">100</i><i class="u" style="left:971px;width:72px">20</i></div>
<div class="gr" style="top:176px"><i style="left:0;width:14px;border-left:0;background:#f8f8f8"></i><i class="n u" style="left:14px;width:83px">7</i><i class="u" style="left:97px;width:105px">AT-40007</i><i style="left:202px;width:140px">1#调度室控制器</i><i style="left:342px;width:109px">探测器-7</i><i class="n u" style="left:450px;width:104px">7</i><i class="u" style="left:554px;width:102px">FT-2104</i><i class="u" style="left:656px;width:103px">GAS</i><i class="u" style="left:759px;width:99px">PPM</i><i class="u" style="left:858px;width:113px">100</i><i class="u" style="left:971px;width:72px">20</i></div>
<div class="gr" style="top:201px"><i style="left:0;width:14px;border-left:0;background:#f8f8f8"></i><i class="n u" style="left:14px;width:83px">8</i><i class="u" style="left:97px;width:105px">AT-40008</i><i style="left:202px;width:140px">1#调度室控制器</i><i style="left:342px;width:109px">探测器-8</i><i class="n u" style="left:450px;width:104px">8</i><i class="u" style="left:554px;width:102px">FT-2104</i><i class="u" style="left:656px;width:103px">GAS</i><i class="u" style="left:759px;width:99px">PPM</i><i class="u" style="left:858px;width:113px">100</i><i class="u" style="left:971px;width:72px">20</i></div>
<div class="gr" style="top:226px;background:#f7f7f7"><i style="left:0;width:14px;border-left:0;background:#f8f8f8"></i><i class="n u" style="left:14px;width:83px">9</i><i class="u" style="left:97px;width:105px">AT-40009</i><i style="left:202px;width:140px">2#调度室控制器</i><i style="left:342px;width:109px">探测器-9</i><i class="n u" style="left:450px;width:104px">1</i><i class="u" style="left:554px;width:102px">FE-2102</i><i class="u" style="left:656px;width:103px">GAS</i><i class="u" style="left:759px;width:99px">PPM</i><i class="u" style="left:858px;width:113px">100</i><i class="u" style="left:971px;width:72px">20</i></div>
<div class="gr" style="top:251px"><i style="left:0;width:14px;border-left:0;background:#f8f8f8"></i><i class="n u" style="left:14px;width:83px">10</i><i class="u" style="left:97px;width:105px">AT-40010</i><i style="left:202px;width:140px">2#调度室控制器</i><i style="left:342px;width:109px">探测器-10</i><i class="n u" style="left:450px;width:104px">2</i><i class="u" style="left:554px;width:102px">FE-2102</i><i class="u" style="left:656px;width:103px">GAS</i><i class="u" style="left:759px;width:99px">PPM</i><i class="u" style="left:858px;width:113px">100</i><i class="u" style="left:971px;width:72px">20</i></div>
<div class="gr" style="top:276px"><i style="left:0;width:14px;border-left:0;background:#f8f8f8"></i><i class="n u" style="left:14px;width:83px">11</i><i class="u" style="left:97px;width:105px">AT-40011</i><i style="left:202px;width:140px">2#调度室控制器</i><i style="left:342px;width:109px">探测器-11</i><i class="n u" style="left:450px;width:104px">3</i><i class="u" style="left:554px;width:102px">FE-2102</i><i class="u" style="left:656px;width:103px">GAS</i><i class="u" style="left:759px;width:99px">PPM</i><i class="u" style="left:858px;width:113px">100</i><i class="u" style="left:971px;width:72px">20</i></div>
<div class="gr" style="top:301px;background:#f2f7fd"><i style="left:0;width:14px;border-left:0;background:#f8f8f8"></i><i class="n u" style="left:14px;width:83px">12</i><i class="u" style="left:97px;width:105px">AT-40012</i><i style="left:202px;width:140px">2#调度室控制器</i><i style="left:342px;width:109px">探测器-12</i><i class="n u" style="left:450px;width:104px">4</i><i class="u" style="left:554px;width:102px">FE-2102</i><i class="u" style="left:656px;width:103px">GAS</i><i class="u" style="left:759px;width:99px">PPM</i><i class="u" style="left:858px;width:113px">100</i><i class="u" style="left:971px;width:72px">20</i></div>
<div class="gr" style="top:326px"><i style="left:0;width:14px;border-left:0;background:#f8f8f8"></i><i class="n u" style="left:14px;width:83px">13</i><i class="u" style="left:97px;width:105px">AT-40013</i><i style="left:202px;width:140px">2#调度室控制器</i><i style="left:342px;width:109px">探测器-13</i><i class="n u" style="left:450px;width:104px">5</i><i class="u" style="left:554px;width:102px">FE-2102</i><i class="u" style="left:656px;width:103px">GAS</i><i class="u" style="left:759px;width:99px">PPM</i><i class="u" style="left:858px;width:113px">100</i><i class="u" style="left:971px;width:72px">20</i></div>
<div class="gr" style="top:351px"><i style="left:0;width:14px;border-left:0;background:#f8f8f8"></i><i class="n u" style="left:14px;width:83px">14</i><i class="u" style="left:97px;width:105px">AT-40014</i><i style="left:202px;width:140px">2#调度室控制器</i><i style="left:342px;width:109px">探测器-14</i><i class="n u" style="left:450px;width:104px">6</i><i class="u" style="left:554px;width:102px">FE-2102</i><i class="u" style="left:656px;width:103px">GAS</i><i class="u" style="left:759px;width:99px">PPM</i><i class="u" style="left:858px;width:113px">100</i><i class="u" style="left:971px;width:72px">20</i></div>
<div class="gr" style="top:376px;background:#f7f7f7"><i style="left:0;width:14px;border-left:0;background:#f8f8f8"></i><i class="n u" style="left:14px;width:83px">15</i><i class="u" style="left:97px;width:105px">AT-40015</i><i style="left:202px;width:140px">2#调度室控制器</i><i style="left:342px;width:109px">探测器-15</i><i class="n u" style="left:450px;width:104px">7</i><i class="u" style="left:554px;width:102px">FE-2102</i><i class="u" style="left:656px;width:103px">GAS</i><i class="u" style="left:759px;width:99px">PPM</i><i class="u" style="left:858px;width:113px">100</i><i class="u" style="left:971px;width:72px">20</i></div>
</div>
<div class="abs" style="left:251px;top:132px;width:3px;height:448px;background:#f0f0f0"></div>
<div class="abs" style="left:1295px;top:189px;width:21px;height:400px;background:#f0f0f0"></div>
<div class="abs" style="left:1295px;top:189px;width:21px;height:25px;background:#fff"></div>
<svg class="abs" style="left:1299px;top:197px" width="12" height="8" viewBox="0 0 12 8"><path d="M1 7l5-5 5 5" fill="none" stroke="#444" stroke-width="1.600"/></svg>
<div class="abs" style="left:1296px;top:214px;width:20px;height:264px;background:#cdcdcd"></div>
<div class="abs" style="left:1153px;top:564px;width:117px;height:20px;background:#fff;border:1px solid #a0a0a0"></div>
</div>
<svg class="abs" style="left:0;top:0" width="1380" height="900" viewBox="0 0 1380 900"><polygon points="332.600,359 357,355 355.500,361.500 474,399.500 353.500,369 350.700,375" fill="#f93432"/><polygon points="150.900,547.500 170.600,534.500 172.300,540 270.900,531 173.500,549.800 173.800,555.600" fill="#f93432"/><polygon points="1137,900 1160,894 1166,897 1166,900" fill="#f26522"/></svg>
</body></html>
